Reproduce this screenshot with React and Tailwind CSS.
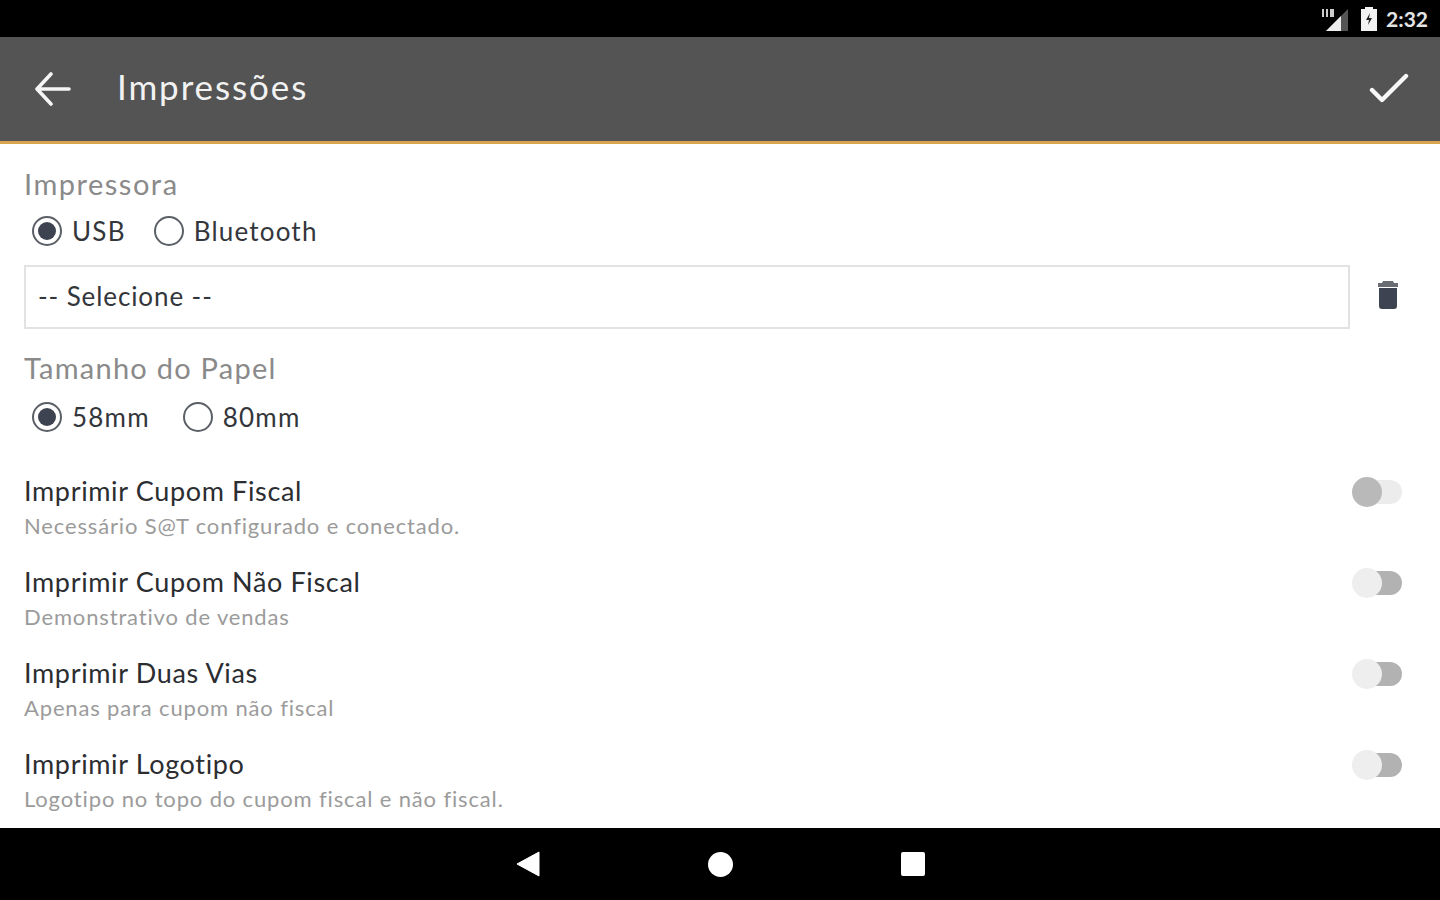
const rows = [
  { title: 'Imprimir Cupom Fiscal', sub: 'Necessário S@T configurado e conectado.', disabled: true },
  { title: 'Imprimir Cupom Não Fiscal', sub: 'Demonstrativo de vendas' },
  { title: 'Imprimir Duas Vias', sub: 'Apenas para cupom não fiscal' },
  { title: 'Imprimir Logotipo', sub: 'Logotipo no topo do cupom fiscal e não fiscal.' },
];

const Radio = ({ label, checked, className = '' }) => (
  <div className={`flex items-center ${className}`}>
    <div className="w-[30px] h-[30px] rounded-full border-[2px] border-[#5b5f66] flex items-center justify-center shrink-0">
      {checked && <div className="w-[18px] h-[18px] rounded-full bg-[#3d4350]"></div>}
    </div>
    <span className="ml-[10px] text-[26px] leading-[30px] text-[#33363b] tracking-[1.2px]">{label}</span>
  </div>
);

const Toggle = ({ disabled }) => (
  <div className="relative w-[50px] h-[24px] mr-[38px] shrink-0">
    <div className={`absolute right-0 top-0 w-[40px] h-[24px] rounded-full ${disabled ? 'bg-[#ececec]' : 'bg-[#b2b2b2]'}`}></div>
    <div className={`absolute left-0 top-[-3px] w-[30px] h-[30px] rounded-full ${disabled ? 'bg-[#b9b9b9]' : 'bg-[#eeeeee]'}`}></div>
  </div>
);

const App = () => {
  return (
    <div className="w-[1440px] h-[900px] flex flex-col bg-white overflow-hidden font-['Lato',sans-serif]">
      {/* status bar */}
      <div className="h-[37px] bg-black flex items-center justify-end pr-[12px] shrink-0">
        <svg width="30" height="26" viewBox="0 0 30 26" className="mr-[10px]">
          <path d="M28 3 V25 H6 Z" fill="#555" />
          <path d="M21 10 V25 H6 Z" fill="#eee" />
          <rect x="2" y="3" width="2" height="8" fill="#ccc" />
          <rect x="6" y="3" width="2" height="8" fill="#ccc" />
          <rect x="10" y="3" width="4" height="8" fill="#ccc" />
        </svg>
        <svg width="18" height="24" viewBox="0 0 18 24" className="mr-[8px]">
          <path d="M5 0 H13 V2 H17 V24 H1 V2 H5 Z" fill="#f2f2f2" />
          <path d="M10 6 L6 13 H9 L8 18 L12 11 H9 Z" fill="#222" />
        </svg>
        <span className="text-[21px] font-bold text-[#e4e4e4] leading-none">2:32</span>
      </div>

      {/* toolbar */}
      <div className="h-[107px] bg-[#545454] border-b-[3px] border-[#d9a44e] flex items-center shrink-0">
        <svg width="36" height="36" viewBox="0 0 36 36" className="ml-[35px]" fill="none" stroke="#f5f5f5" strokeWidth="3.6" strokeLinecap="round" strokeLinejoin="round">
          <path d="M34 18 H3 M16 3 L2 18 L16 33" />
        </svg>
        <h1 className="ml-[46px] pb-[6px] text-[35px] leading-none text-[#f2f2f2] tracking-[1.9px]">Impressões</h1>
        <svg width="40" height="32" viewBox="0 0 40 32" className="ml-auto mr-[31px]" fill="none" stroke="#f8f8f8" strokeWidth="4.4" strokeLinecap="round" strokeLinejoin="round">
          <path d="M3 17 L13 27 L37 3" />
        </svg>
      </div>

      {/* content */}
      <div className="flex-1 min-h-0 pl-[24px] pt-[23px]">
        <div className="text-[29px] leading-[34px] text-[#8a8a8a] tracking-[1.5px]">Impressora</div>
        <div className="flex mt-[15px] ml-[8px]">
          <Radio label="USB" checked />
          <Radio label="Bluetooth" className="ml-[28px]" />
        </div>

        <div className="flex items-center mt-[19px]">
          <div className="w-[1326px] h-[64px] border-[2px] border-[#e2e2e2] flex items-center pl-[12px] pb-[2px] text-[26px] text-[#33363b] tracking-[0.9px]">
            -- Selecione --
          </div>
          <svg width="22" height="30" viewBox="0 0 22 30" className="ml-[27px] mb-[4px]">
            <path d="M6 1 H16 L17 3 H21 V7 H1 V3 H5 Z" fill="#6a6d73" />
            <path d="M2 8 H20 V26 Q20 29 17 29 H5 Q2 29 2 26 Z" fill="#3d4350" />
          </svg>
        </div>

        <div className="text-[29px] leading-[34px] text-[#8a8a8a] tracking-[1.25px] mt-[22px]">Tamanho do Papel</div>
        <div className="flex mt-[17px] ml-[8px]">
          <Radio label="58mm" checked />
          <Radio label="80mm" className="ml-[33px]" />
        </div>

        <div className="mt-[43px]">
          {rows.map((row) => (
            <div key={row.title} className="h-[91px] flex items-start">
              <div className="flex-1">
                <div className="text-[27px] leading-[32px] text-[#2b2d31] tracking-[0.65px]">{row.title}</div>
                <div className="mt-[6px] text-[22px] leading-[26px] text-[#9b9b9b] tracking-[0.85px]">{row.sub}</div>
              </div>
              <div className="mt-[5px]">
                <Toggle disabled={row.disabled} />
              </div>
            </div>
          ))}
        </div>
      </div>

      {/* nav bar */}
      <div className="h-[72px] bg-black shrink-0 flex items-center justify-center gap-[168px]">
        <svg width="24" height="26" viewBox="0 0 24 26"><path d="M23 1 V25 L1 13 Z" fill="#fff" stroke="#fff" strokeLinejoin="round" /></svg>
        <div className="w-[25px] h-[25px] rounded-full bg-white"></div>
        <div className="w-[24px] h-[24px] rounded-[2px] bg-white"></div>
      </div>
    </div>
  );
};

export default App;
